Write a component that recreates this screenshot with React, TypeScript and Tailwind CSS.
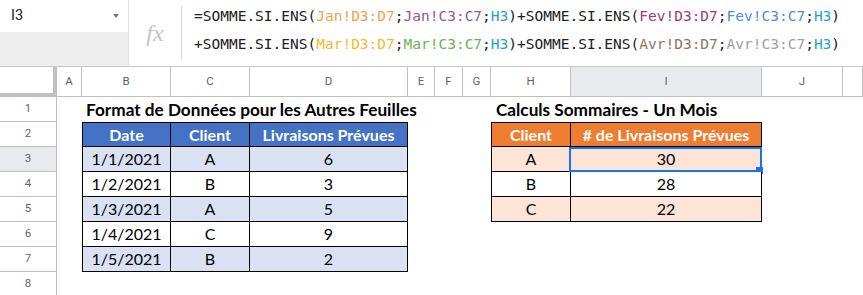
import React from "react";

type Seg = [string, string];

const K = "#202124";
const OR = "#f5a04a";
const PU = "#8e5aa0";
const TE = "#1aa3d0";
const MA = "#a8386a";
const BL = "#4d8af0";
const YE = "#f4b830";
const GR = "#6cb055";
const BR = "#8d7366";
const GY = "#a0a0a0";

const line1: Seg[] = [
  ["=SOMME.SI.ENS(", K],
  ["Jan!D3:D7", OR],
  [";", K],
  ["Jan!C3:C7", PU],
  [";", K],
  ["H3", TE],
  [")+SOMME.SI.ENS(", K],
  ["Fev!D3:D7", MA],
  [";", K],
  ["Fev!C3:C7", BL],
  [";", K],
  ["H3", TE],
  [")", K],
];

const line2: Seg[] = [
  ["+SOMME.SI.ENS(", K],
  ["Mar!D3:D7", YE],
  [";", K],
  ["Mar!C3:C7", GR],
  [";", K],
  ["H3", TE],
  [")+SOMME.SI.ENS(", K],
  ["Avr!D3:D7", BR],
  [";", K],
  ["Avr!C3:C7", GY],
  [";", K],
  ["H3", TE],
  [")", K],
];

const letters = ["A", "B", "C", "D", "E", "F", "G", "H", "I", "J", ""];

type Cell = { t?: string; cls?: string; sel?: boolean };

const T = "border-r border-b border-black text-center";
const BLUE_H = `${T} bg-[#4472c4] text-white font-bold text-[16.5px] border-t`;
const ORNG_H = `${T} bg-[#ed7d31] text-white font-bold text-[16.5px] border-t`;
const LB = `${T} bg-[#d9e1f2]`;
const WH = `${T} bg-white`;
const PE = `${T} bg-[#fce4d6]`;

// index 0 = col A ... 10 = col K
function rowCells(r: number): Cell[] {
  const c: Cell[] = Array.from({ length: 11 }, () => ({}));
  const data = [
    ["1/1/2021", "A", "6"],
    ["1/2/2021", "B", "3"],
    ["1/3/2021", "A", "5"],
    ["1/4/2021", "C", "9"],
    ["1/5/2021", "B", "2"],
  ];
  const sums = [
    ["A", "30"],
    ["B", "28"],
    ["C", "22"],
  ];
  if (r === 1) {
    c[1] = { t: "Format de Données pour les Autres Feuilles", cls: "font-bold text-[17.2px] pl-1 whitespace-nowrap overflow-visible z-10" };
    c[7] = { t: "Calculs Sommaires - Un Mois", cls: "font-bold text-[17.2px] pl-[5px] whitespace-nowrap overflow-visible z-10" };
  }
  if (r === 2) {
    c[1] = { t: "Date", cls: `${BLUE_H} border-l` };
    c[2] = { t: "Client", cls: BLUE_H };
    c[3] = { t: "Livraisons Prévues", cls: BLUE_H };
    c[7] = { t: "Client", cls: `${ORNG_H} border-l` };
    c[8] = { t: "# de Livraisons Prévues", cls: ORNG_H };
  }
  if (r >= 3 && r <= 7) {
    const d = data[r - 3];
    const bg = r % 2 === 1 ? LB : WH;
    c[1] = { t: d[0], cls: `${bg} border-l` };
    c[2] = { t: d[1], cls: bg };
    c[3] = { t: d[2], cls: bg };
  }
  if (r >= 3 && r <= 5) {
    const s = sums[r - 3];
    const bg = r % 2 === 1 ? PE : WH;
    c[7] = { t: s[0], cls: `${bg} border-l` };
    c[8] = { t: s[1], cls: bg, sel: r === 3 };
  }
  return c;
}

export default function App() {
  return (
    <div className="w-[863px] h-[295px] overflow-hidden bg-white font-['Roboto',sans-serif]">
      {/* formula bar */}
      <div className="flex h-[67px] border-b border-[#c7c7c7]">
        <div className="flex w-[129px] flex-col border-r border-[#e0e0e0]">
          <div className="flex h-[32px] items-center justify-between bg-white pl-[11px] pr-[9px]">
            <span className="text-[14.5px] text-[#202124]">I3</span>
            <span className="h-0 w-0 border-x-[3px] border-t-[4px] border-x-transparent border-t-[#757575]" />
          </div>
          <div className="flex-1 bg-[#eeeeee]" />
        </div>
        <div className="flex w-[52px] items-center justify-center">
          <span className="font-['Liberation_Serif',serif] text-[24px] italic text-[#c4c4c4] leading-none">fx</span>
        </div>
        <div className="my-[6px] w-px bg-[#dadce0]" />
        <div className="pl-[12px] pt-[2px] font-['DejaVu_Sans_Mono',monospace] text-[14.5px] leading-[28px] whitespace-pre">
          {[line1, line2].map((ln, i) => (
            <div key={i}>
              {ln.map(([s, col], j) => (
                <span key={j} style={{ color: col }}>
                  {s}
                </span>
              ))}
            </div>
          ))}
        </div>
      </div>

      {/* sheet grid */}
      <div className="grid grid-cols-[57px_25px_89px_79px_158px_27px_28px_28px_80px_191px_81px_1fr] grid-rows-[30px_repeat(8,25px)]">
        <div className="border-r-4 border-b-4 border-[#c0c0c0] bg-white" />
        {letters.map((l, i) => (
          <div
            key={i}
            className={`flex items-center justify-center border-r border-b border-[#c0c0c0] text-[11.5px] text-[#5f6368] ${
              l === "I" ? "bg-[#e8eaed]" : "bg-white"
            }`}
          >
            {l}
          </div>
        ))}
        {Array.from({ length: 8 }, (_, k) => k + 1).map((r) => (
          <React.Fragment key={r}>
            <div
              className={`flex items-center justify-center border-r border-b border-[#c0c0c0] text-[11.5px] text-[#5f6368] ${
                r === 3 ? "bg-[#e8eaed]" : "bg-white"
              }`}
            >
              {r}
            </div>
            {rowCells(r).map((c, i) => (
              <div
                key={i}
                className={`relative flex items-center font-['Lato',sans-serif] text-[16px] text-black ${
                  c.cls?.includes("text-center") ? "justify-center" : ""
                } ${c.cls ?? ""}`}
              >
                {c.t}
                {c.sel && (
                  <>
                    <div className="absolute -left-[2px] top-0 -right-[1px] -bottom-[1px] border-2 border-[#1a73e8]" />
                    <div className="absolute -right-[2px] -bottom-[3px] h-[7px] w-[7px] bg-[#1a73e8]" />
                  </>
                )}
              </div>
            ))}
          </React.Fragment>
        ))}
      </div>
    </div>
  );
}
